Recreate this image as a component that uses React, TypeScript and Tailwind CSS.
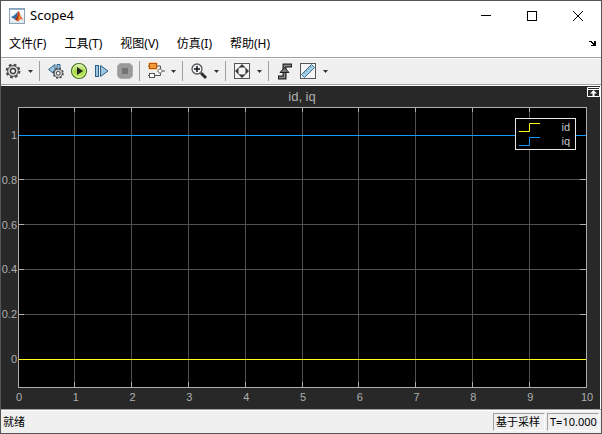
import type { ReactNode } from "react";

const menus = ["文件(F)", "工具(T)", "视图(V)", "仿真(I)", "帮助(H)"];
const xTicks = [0, 1, 2, 3, 4, 5, 6, 7, 8, 9, 10];
const yTicks = [0, 0.2, 0.4, 0.6, 0.8, 1];

// the y axis runs from -0.125 to 1.125
const xPos = (v: number) => `${v * 10}%`;
const yPos = (v: number) => `${90 - v * 80}%`;

function ToolButton({ label, disabled, children }: { label: string; disabled?: boolean; children: ReactNode }) {
  return (
    <button aria-label={label} disabled={disabled} className="flex h-full w-[23px] items-center justify-center">
      <svg width="18" height="18" viewBox="0 0 18 18" fill="none">
        {children}
      </svg>
    </button>
  );
}

function Caret({ label }: { label: string }) {
  return (
    <button aria-label={label} className="flex h-full w-3 items-center justify-center">
      <svg width="5" height="3" viewBox="0 0 5 3">
        <path d="M0 0h5L2.5 3z" fill="#333" />
      </svg>
    </button>
  );
}

function Separator() {
  return <div className="ml-[3px] mr-1 h-5 w-px bg-[#a0a0a0]" />;
}

function GearShape() {
  return (
    <>
      <circle cx="9" cy="9" r="6.200" stroke="#4a4a4a" strokeWidth="2.400" strokeDasharray="2.600 2.270" />
      <circle cx="9" cy="9" r="5.400" fill="#c4c4c4" stroke="#4a4a4a" />
      <circle cx="9" cy="9" r="4" stroke="#dedede" />
      <circle cx="9" cy="9" r="2.500" fill="#fafafa" stroke="#3c3c3c" strokeWidth="1.300" />
    </>
  );
}

function TitleBar() {
  return (
    <header className="flex h-[29px] items-center bg-white">
      <svg className="ml-2" width="16" height="16" viewBox="0 0 16 16">
        <defs>
          <linearGradient id="frame" x1="0" y1="0" x2="0" y2="1">
            <stop offset="0" stopColor="#fff" />
            <stop offset="1" stopColor="#dfe8f0" />
          </linearGradient>
        </defs>
        <rect x=".5" y=".5" width="15" height="15" fill="url(#frame)" stroke="#8ea2b5" />
        <path d="M1 1.500h14" stroke="#8fb0cf" />
        <path d="M2 9l3-1.500L7.500 5 9 3.500 8.500 8 6 11.500 4.500 10.500z" fill="#2f6da8" />
        <path d="M9 3c1.200 0 2 3 2.800 5.500L14.500 12 12 10.800 9 13.500 6 11.500 7.800 9z" fill="#d9541e" />
        <path d="M9 3c.3 3-.2 6-3 8.500l1.500.800C9.500 10 9.800 6 9 3z" fill="#8c1f12" />
        <path d="M10 6.500l1.500 4-2 2z" fill="#f6a12b" />
      </svg>
      <h1 className="ml-[5px] text-[13px]">Scope4</h1>
      <div className="ml-auto flex h-full">
        <button aria-label="最小化" className="flex w-[46px] items-center justify-center">
          <svg width="10" height="10" viewBox="0 0 10 10">
            <path d="M0 4.500h10" stroke="#000" />
          </svg>
        </button>
        <button aria-label="最大化" className="flex w-[46px] items-center justify-center">
          <svg width="10" height="10" viewBox="0 0 10 10">
            <rect x=".5" y=".5" width="9" height="9" fill="none" stroke="#000" />
          </svg>
        </button>
        <button aria-label="关闭" className="flex w-[46px] items-center justify-center">
          <svg width="10" height="10" viewBox="0 0 10 10">
            <path d="M0 0l10 10M10 0L0 10" stroke="#000" />
          </svg>
        </button>
      </div>
    </header>
  );
}

function MenuBar() {
  return (
    <nav className="flex h-[27px] items-center gap-[18px] bg-white pl-2 text-xs">
      {menus.map((menu) => (
        <button key={menu}>{menu}</button>
      ))}
      <button aria-label="停靠" className="ml-auto mr-[5px]">
        <svg width="7" height="5" viewBox="0 0 7 5" shapeRendering="crispEdges">
          <path d="M0 0h3v1h1v1h1V0h2v5H2V4h2V3H3V2H2V1H0z" fill="#000" />
        </svg>
      </button>
    </nav>
  );
}

function Toolbar() {
  return (
    <div className="flex h-7 items-center border-y border-[#a0a0a0] bg-[#f0f0f0] shadow-[inset_0_1px_0_#fff]">
      <ToolButton label="配置属性">
        <GearShape />
      </ToolButton>
      <Caret label="配置选项" />
      <Separator />
      <ToolButton label="步退选项">
        <path d="M1.500 7.500L8 2.500v10z" fill="#9cc6e4" stroke="#2e5f86" />
        <path d="M10 2.500h3V8h-3z" fill="#9cc6e4" stroke="#2e5f86" />
        <g transform="translate(4.500 4.500) scale(.75)">
          <GearShape />
        </g>
      </ToolButton>
      <ToolButton label="运行">
        <defs>
          <linearGradient id="run" x1="0" y1="0" x2="0" y2="1">
            <stop offset="0" stopColor="#e9f7c4" />
            <stop offset=".5" stopColor="#a5d843" />
            <stop offset="1" stopColor="#c8f06a" />
          </linearGradient>
        </defs>
        <circle cx="9" cy="9" r="7.500" fill="url(#run)" stroke="#45701c" strokeWidth="1.200" />
        <circle cx="9" cy="9" r="6.300" stroke="#e2f6b4" strokeWidth=".8" />
        <path d="M7 5l6 4-6 4z" fill="#222" />
      </ToolButton>
      <ToolButton label="步进">
        <rect x="2.500" y="3.500" width="3" height="11" fill="#9cc6e4" stroke="#2e5f86" />
        <path d="M7.500 3.500L15 9l-7.500 5.500z" fill="#9cc6e4" stroke="#2e5f86" />
      </ToolButton>
      <ToolButton label="停止" disabled>
        <rect x="1" y="1" width="16" height="16" rx="5" fill="#9a9a9a" />
        <rect x="1.500" y="1.500" width="15" height="15" rx="4.500" stroke="#acacac" />
        <rect x="6" y="6" width="6" height="6" fill="#737373" />
      </ToolButton>
      <Separator />
      <ToolButton label="突出显示模块">
        <rect x="1" y="0" width="10" height="8" rx="2" fill="#ffcf8a" />
        <rect x="2.500" y="1.500" width="7" height="5" fill="#f39a3c" stroke="#b5541a" />
        <path d="M10 4h3.500v3M8 13.500h5.500V11M1 4h1M1 13.500h1" stroke="#555" />
        <rect x="2.500" y="11.500" width="5" height="4" fill="#fff" stroke="#555" />
        <path d="M10.500 9L13 6.500 15.500 9 13 11.500z" fill="#fff" stroke="#555" />
        <path d="M15.500 9H18" stroke="#555" />
      </ToolButton>
      <Caret label="突出显示选项" />
      <Separator />
      <ToolButton label="放大">
        <path d="M11 11l5 5" stroke="#2d2d2d" strokeWidth="3" />
        <circle cx="7" cy="7" r="5" fill="#eef6fb" stroke="#555" strokeWidth="1.300" />
        <path d="M4 7h6M7 4v6" stroke="#111" strokeWidth="1.500" />
      </ToolButton>
      <Caret label="缩放选项" />
      <Separator />
      <ToolButton label="缩放以适应">
        <rect x="1.500" y="1.500" width="15" height="15" fill="#f5f5f5" stroke="#555" />
        <circle cx="9" cy="9" r="4.500" stroke="#888" />
        <path d="M9 2l3.500 3.500h-7zM9 16l3.500-3.500h-7zM2 9l3.500-3.500v7zM16 9l-3.500-3.500v7z" fill="#3c3c3c" />
      </ToolButton>
      <Caret label="适应选项" />
      <Separator />
      <ToolButton label="触发器">
        <path d="M2 15.500h6.500V3.500H16" stroke="#222" strokeWidth="4" />
        <path d="M3 15.500h5.500V3.500H15" stroke="#8f8f8f" strokeWidth="1.500" />
        <path d="M8.500 5.500L13 10.500H4z" fill="#777" stroke="#222" />
      </ToolButton>
      <ToolButton label="游标测量">
        <rect x="1.500" y="1.500" width="15" height="15" fill="#f5f5f5" stroke="#555" />
        <path d="M2.500 12.500L12.500 2.500 15.500 5.500 5.500 15.500z" fill="#a9d3ec" stroke="#3b6b8c" />
        <path d="M5 10.500l1 1M7 8.500l1 1M9 6.500l1 1M11 4.500l1 1" stroke="#28506e" />
      </ToolButton>
      <Caret label="测量选项" />
    </div>
  );
}

function Legend() {
  return (
    <ul className="absolute right-[10px] top-[11px] w-[61px] border border-[#e8e8e8] bg-black py-px pl-[3px] pr-[5px] text-[11px] leading-[14px] text-[#c8c8c8]">
      <li className="flex items-center justify-between">
        <svg width="21" height="10" viewBox="0 0 21 10" fill="none">
          <path d="M0 9.500h10.500v-8H21" stroke="#ffff1a" />
        </svg>
        id
      </li>
      <li className="flex items-center justify-between">
        <svg width="21" height="10" viewBox="0 0 21 10" fill="none">
          <path d="M0 9.500h10.500v-8H21" stroke="#1398ff" />
        </svg>
        iq
      </li>
    </ul>
  );
}

function Plot() {
  return (
    <div className="relative ml-[17px] mr-[14px] flex-1 bg-black">
      <svg className="absolute inset-0 size-full overflow-visible" shapeRendering="crispEdges">
        {xTicks.map((v) => (
          <g key={v}>
            <line x1={xPos(v)} x2={xPos(v)} y1="0" y2="100%" stroke="#525252" />
            <line x1={xPos(v)} x2={xPos(v)} y1="0" y2="5" stroke="#afafaf" />
            <svg y="100%" overflow="visible">
              <line x1={xPos(v)} x2={xPos(v)} y1="-5" y2="0" stroke="#afafaf" />
              <text x={xPos(v)} y="14" dx="1" textAnchor="middle" fill="#afafaf" fontSize="11">
                {v}
              </text>
            </svg>
          </g>
        ))}
        {yTicks.map((v) => (
          <g key={v}>
            <line x1="0" x2="100%" y1={yPos(v)} y2={yPos(v)} stroke="#525252" />
            <line x1="0" x2="6" y1={yPos(v)} y2={yPos(v)} stroke="#afafaf" />
            <svg x="100%" overflow="visible">
              <line x1="-6" x2="0" y1={yPos(v)} y2={yPos(v)} stroke="#afafaf" />
            </svg>
            <text x="-1" y={yPos(v)} dy="4" textAnchor="end" fill="#afafaf" fontSize="11">
              {v}
            </text>
          </g>
        ))}
        <rect width="100%" height="100%" fill="none" stroke="#afafaf" />
        <line x1="1" x2="100%" y1={yPos(1)} y2={yPos(1)} stroke="#1398ff" />
        <line x1="1" x2="100%" y1={yPos(0)} y2={yPos(0)} stroke="#ffff1a" />
      </svg>
      <Legend />
    </div>
  );
}

export default function App() {
  return (
    <div className="flex h-screen flex-col border border-[#555] bg-[#f0f0f0] font-['Noto_Sans','Noto_Sans_CJK_SC',sans-serif] text-black">
      <TitleBar />
      <MenuBar />
      <Toolbar />

      {/* Scope display */}
      <main className="relative flex flex-1 flex-col border-r border-t border-white bg-[#282828] pb-[22px] font-['Liberation_Sans',sans-serif]">
        <h2 className="ml-[17px] mr-[14px] h-[21px] text-center text-[13px] leading-[22px] text-[#afafaf]">id, iq</h2>
        <button aria-label="最大化坐标区" className="absolute right-0 top-px">
          <svg width="13" height="10" viewBox="0 0 13 10" fill="none">
            <path d="M.5.500h12v9H.5zM.5 2.500h12" stroke="#fff" />
            <path d="M6.500 3L10 6.500H7.500V9h-2V6.500H3z" fill="#fff" />
          </svg>
        </button>
        <Plot />
      </main>

      {/* Status bar */}
      <footer className="flex h-6 items-center gap-[2px] border-t border-[#a0a0a0] px-[2px] pt-px text-[11px] shadow-[inset_0_1px_0_#fff]">
        <span className="mr-auto">就绪</span>
        <span className="h-[18px] w-[52px] border border-b-white border-l-[#a0a0a0] border-r-white border-t-[#a0a0a0] pl-[2px] leading-4">
          基于采样
        </span>
        <span className="h-[18px] w-[52px] border border-b-white border-l-[#a0a0a0] border-r-white border-t-[#a0a0a0] pl-[2px] leading-4">
          T=10.000
        </span>
      </footer>
    </div>
  );
}
